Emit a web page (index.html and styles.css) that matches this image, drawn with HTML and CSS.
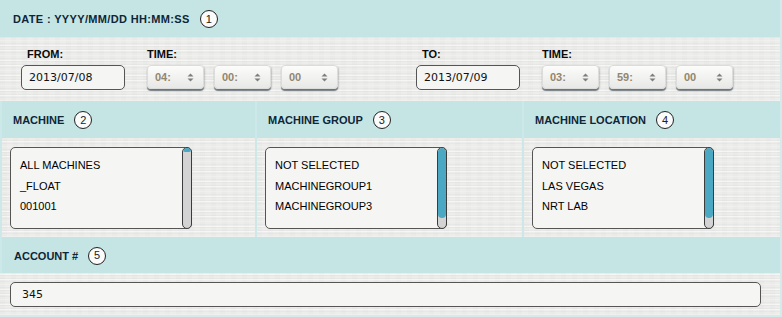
FILE: index.html
```html
<!DOCTYPE html>
<html lang="en">
<head>
<meta charset="utf-8">
<title>Filter panel</title>
<link rel="stylesheet" href="styles.css">
</head>
<body>
<div class="panel">
  <section class="sec sec-date">
    <div class="bar"><span class="title title-wide">DATE : YYYY/MM/DD HH:MM:SS</span><span class="num">1</span></div>
    <div class="body body-date">
      <div class="range">
        <div class="field">
          <div class="label label-date">FROM:</div>
          <div class="input date">2013/07/08</div>
        </div>
        <div class="field">
          <div class="label">TIME:</div>
          <div class="spins">
            <div class="spin"><span>04:</span><svg class="arrows" width="7" height="9" viewBox="0 0 7 9"><polygon points="0.5,3.5 3.5,0.5 6.5,3.5"/><polygon points="0.5,5.5 3.5,8.5 6.5,5.5"/></svg></div>
            <div class="spin"><span>00:</span><svg class="arrows" width="7" height="9" viewBox="0 0 7 9"><polygon points="0.5,3.5 3.5,0.5 6.5,3.5"/><polygon points="0.5,5.5 3.5,8.5 6.5,5.5"/></svg></div>
            <div class="spin"><span>00</span><svg class="arrows" width="7" height="9" viewBox="0 0 7 9"><polygon points="0.5,3.5 3.5,0.5 6.5,3.5"/><polygon points="0.5,5.5 3.5,8.5 6.5,5.5"/></svg></div>
          </div>
        </div>
      </div>
      <div class="range range-to">
        <div class="field">
          <div class="label label-date">TO:</div>
          <div class="input date">2013/07/09</div>
        </div>
        <div class="field">
          <div class="label">TIME:</div>
          <div class="spins">
            <div class="spin"><span>03:</span><svg class="arrows" width="7" height="9" viewBox="0 0 7 9"><polygon points="0.5,3.5 3.5,0.5 6.5,3.5"/><polygon points="0.5,5.5 3.5,8.5 6.5,5.5"/></svg></div>
            <div class="spin"><span>59:</span><svg class="arrows" width="7" height="9" viewBox="0 0 7 9"><polygon points="0.5,3.5 3.5,0.5 6.5,3.5"/><polygon points="0.5,5.5 3.5,8.5 6.5,5.5"/></svg></div>
            <div class="spin"><span>00</span><svg class="arrows" width="7" height="9" viewBox="0 0 7 9"><polygon points="0.5,3.5 3.5,0.5 6.5,3.5"/><polygon points="0.5,5.5 3.5,8.5 6.5,5.5"/></svg></div>
          </div>
        </div>
      </div>
    </div>
  </section>

  <div class="cols">
    <section class="col col-1">
      <div class="bar"><span class="title">MACHINE</span><span class="num">2</span></div>
      <div class="body body-list">
        <div class="listbox">
          <ul class="items">
            <li>ALL MACHINES</li>
            <li>_FLOAT</li>
            <li>001001</li>
          </ul>
          <div class="scroll"><div class="thumb thumb-small"></div></div>
        </div>
      </div>
    </section>
    <section class="col col-2">
      <div class="bar"><span class="title">MACHINE GROUP</span><span class="num">3</span></div>
      <div class="body body-list">
        <div class="listbox">
          <ul class="items">
            <li>NOT SELECTED</li>
            <li>MACHINEGROUP1</li>
            <li>MACHINEGROUP3</li>
          </ul>
          <div class="scroll"><div class="thumb thumb-large"></div></div>
        </div>
      </div>
    </section>
    <section class="col col-3">
      <div class="bar"><span class="title">MACHINE LOCATION</span><span class="num">4</span></div>
      <div class="body body-list">
        <div class="listbox">
          <ul class="items">
            <li>NOT SELECTED</li>
            <li>LAS VEGAS</li>
            <li>NRT LAB</li>
          </ul>
          <div class="scroll"><div class="thumb thumb-large"></div></div>
        </div>
      </div>
    </section>
  </div>

  <section class="sec sec-account">
    <div class="bar bar-account"><span class="title">ACCOUNT #</span><span class="num">5</span></div>
    <div class="body body-account">
      <div class="input account">345</div>
    </div>
  </section>
</div>
</body>
</html>
```

FILE: styles.css
```css
* { box-sizing: border-box; }

html, body {
  margin: 0;
  padding: 0;
}

body {
  width: 782px;
  height: 317px;
  background: #d3ebeb;
  font-family: "Liberation Sans", Arial, sans-serif;
  overflow: hidden;
}

.panel {
  width: 780px;
  height: 315px;
  display: flex;
  flex-direction: column;
}

.body {
  background-color: #ededeb;
  background-image:
    repeating-linear-gradient(0deg, rgba(0,0,0,0.025) 0 1px, rgba(255,255,255,0) 1px 3px),
    repeating-linear-gradient(0deg, rgba(255,255,255,0.5) 0 1px, rgba(255,255,255,0) 1px 5px),
    repeating-linear-gradient(90deg, rgba(0,0,0,0.012) 0 5px, rgba(255,255,255,0) 5px 11px);
}

/* header bars */
.bar {
  display: flex;
  align-items: center;
  gap: 10px;
  background: #c5e5e4;
  height: 37px;
  padding-left: 13px;
  padding-top: 1px;
}

.title {
  font-weight: bold;
  font-size: 11px;
  color: #0e2638;
  white-space: nowrap;
}

.title-wide {
  letter-spacing: 0.35px;
}

.num {
  width: 18px;
  height: 18px;
  border: 1px solid #222;
  border-radius: 50%;
  background: #fbfbfb;
  display: flex;
  align-items: center;
  justify-content: center;
  font-size: 11px;
  color: #222;
  line-height: 1;
}

/* date row */
.body-date {
  height: 64px;
  display: flex;
  padding: 11px 0 0 21px;
}

.range {
  display: flex;
  gap: 22px;
}

.range-to {
  margin-left: 78px;
}

.field {
  display: flex;
  flex-direction: column;
}

.label {
  font-weight: bold;
  font-size: 11px;
  line-height: 13px;
  color: #0a0a0a;
  height: 13px;
  margin-bottom: 4px;
}

.label-date {
  padding-left: 6px;
}

.input {
  height: 25px;
  border: 1px solid #555;
  border-radius: 5px;
  background: #f5f5f3;
  font-family: "DejaVu Sans", Verdana, sans-serif;
  font-size: 11px;
  color: #111;
  display: flex;
  align-items: center;
}

.date {
  width: 104px;
  padding-left: 7px;
}

.spins {
  display: flex;
  gap: 10px;
}

.spin {
  width: 57px;
  height: 24px;
  border-radius: 4px;
  background: linear-gradient(#fcfcfb, #e8e8e6);
  border: 1px solid #dcdcda;
  box-shadow: 0 2px 1px rgba(40, 55, 65, 0.6), 1px 1px 2px rgba(0,0,0,0.15);
  display: flex;
  align-items: center;
  justify-content: space-between;
  padding: 0 9px 0 7px;
  font-size: 11px;
  font-weight: bold;
  color: #92866f;
}

.arrows {
  fill: #7e7e7e;
}

/* three columns */
.cols {
  display: flex;
}

.col {
  border-left: 2px solid #cde8e8;
  display: flex;
  flex-direction: column;
}

.col-1 { width: 255px; }
.col-2 { width: 267px; }
.col-3 { width: 258px; }

.col .bar {
  padding-left: 11px;
}

.body-list {
  height: 99px;
  padding: 9px 0 0 8px;
}

.listbox {
  width: 182px;
  height: 82px;
  border: 1px solid #555;
  border-radius: 5px;
  background: #f5f5f3;
  display: flex;
}

.items {
  list-style: none;
  margin: 0;
  padding: 7px 0 0 9px;
  flex: 1;
  font-size: 11px;
  line-height: 20.5px;
  color: #000;
}

.scroll {
  width: 10px;
  margin: -1px -1px -1px 0;
  border: 1px solid #3c3c3c;
  border-radius: 5px;
  background: #d3d3d3;
  overflow: hidden;
}

.thumb {
  background: #4aa8c3;
  border-radius: 4px;
}

.thumb-small { height: 4px; }
.thumb-large { height: 70px; }

/* account row */
.bar-account {
  height: 36px;
}

.sec-account .bar {
  border-left: 2px solid #cde8e8;
  padding-left: 12px;
}

.body-account {
  height: 42px;
  padding: 9px 0 0 10px;
}

.account {
  width: 751px;
  padding-left: 11px;
}
```
